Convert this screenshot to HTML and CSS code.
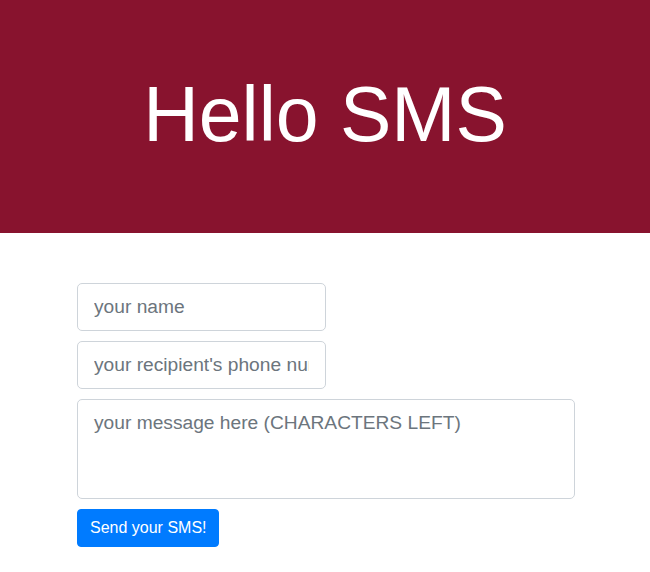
FILE: index.html
```html
<!DOCTYPE html>
<html>
<head>
<meta charset="utf-8">
<link rel="stylesheet" href="styles.css">
</head>
<body>
<header class="hero">
  <h1 class="hero-title">Hello SMS</h1>
</header>
<main class="container">
  <form class="sms-form">
    <input class="field field-half" type="text" placeholder="your name">
    <input class="field field-half" type="text" placeholder="your recipient's phone number">
    <textarea class="field field-area" placeholder="your message here (CHARACTERS LEFT)"></textarea>
    <button class="btn" type="button">Send your SMS!</button>
  </form>
</main>
</body>
</html>
```
FILE: styles.css
```css
* { box-sizing: border-box; }
html, body { margin: 0; padding: 0; }
body {
  font-family: "Liberation Sans", Arial, sans-serif;
  background: #fff;
  color: #212529;
}
.hero {
  background: #88132e;
  height: 233px;
  display: flex;
  align-items: center;
  justify-content: center;
}
.hero-title {
  margin: 0;
  color: #fff;
  font-weight: 400;
  font-size: 77px;
  line-height: 1;
  padding-bottom: 4px;
}
.container {
  width: 498px;
  margin: 50px auto 0 77px;
}
.sms-form {
  display: flex;
  flex-direction: column;
  align-items: flex-start;
  gap: 10px;
}
.field {
  display: block;
  font-family: inherit;
  font-size: 19.2px;
  line-height: 30px;
  color: #495057;
  background: #fff;
  border: 1px solid #ced4da;
  border-radius: 5px;
  padding: 8px 16px;
  margin: 0;
  outline: none;
}
.field::placeholder { color: #6c757d; opacity: 1; }
.field-half {
  width: 249px;
  height: 48px;
}
.field-area {
  width: 498px;
  height: 100px;
  resize: none;
}
.btn {
  font-family: inherit;
  font-size: 16px;
  line-height: 24px;
  color: #fff;
  background: #007bff;
  border: 1px solid #007bff;
  border-radius: 4px;
  padding: 6px 12px;
  height: 38px;
  width: 142px;
  margin: 0;
  white-space: nowrap;
}
```
